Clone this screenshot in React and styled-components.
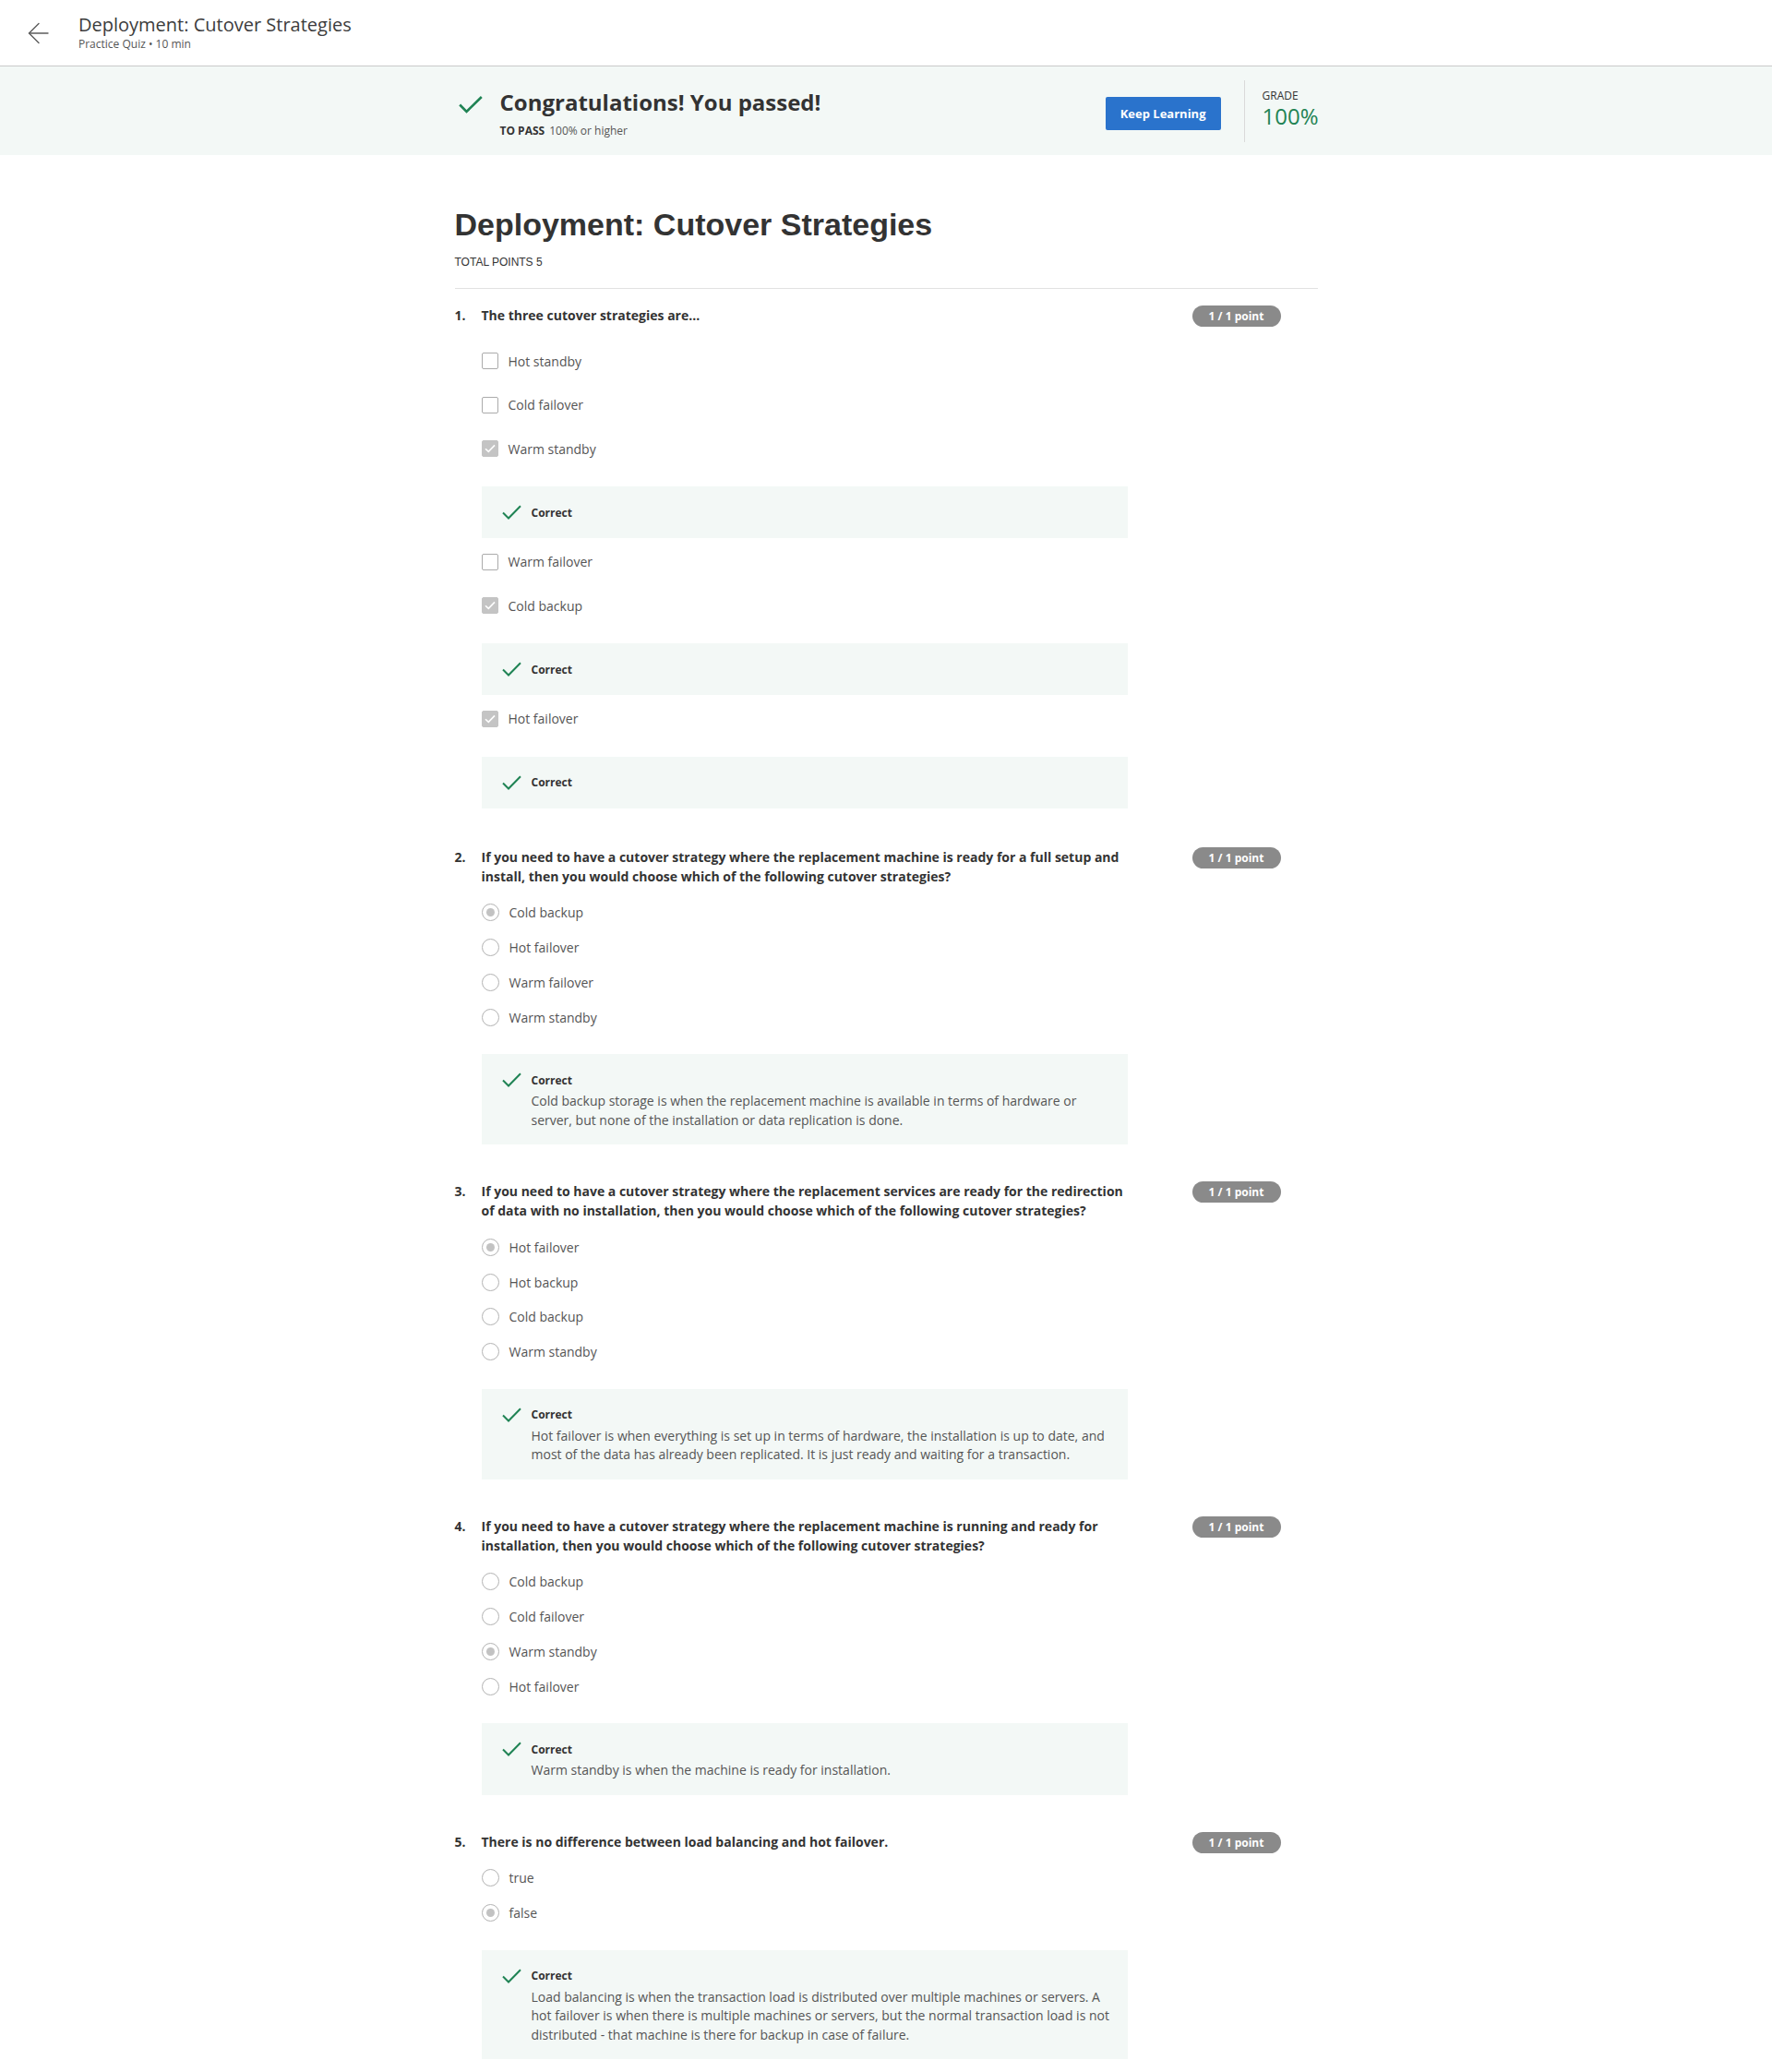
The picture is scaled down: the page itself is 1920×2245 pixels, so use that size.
import React from 'react';
import styled, { createGlobalStyle } from 'styled-components';

const Global = createGlobalStyle`
  html, body { margin: 0; padding: 0; background: #fff; }
  body { font-family: "Open Sans", "Noto Sans", sans-serif; color: #333; }
  * { box-sizing: border-box; }
`;

const GREEN = '#1f8354';

const Header = styled.header`
  height: 72px;
  border-bottom: 1px solid #c9c9c9;
  display: flex;
  align-items: center;
  padding-left: 30px;
  gap: 32px;
`;

const BackButton = styled.button`
  border: 0;
  background: none;
  padding: 0;
  width: 23px;
  height: 24px;
  display: flex;
  color: #5c5c5c;
  cursor: pointer;
`;

const HeaderTitles = styled.div`
  display: flex;
  flex-direction: column;
`;

const HeaderTitle = styled.div`
  font-size: 20px;
  line-height: 24px;
  color: #3c3c3c;
`;

const HeaderSub = styled.div`
  font-size: 12px;
  line-height: 18px;
  color: #555;
`;

const Banner = styled.section`
  background: #f3f8f6;
  height: 96px;
  display: flex;
  align-items: center;
`;

const BannerInner = styled.div`
  width: 935px;
  margin: 0 auto;
  display: flex;
  align-items: center;
`;

const PassBlock = styled.div`
  display: flex;
  align-items: flex-start;
  gap: 19px;
  padding-left: 4px;
  flex: 1;
`;

const BigCheck = styled.svg`
  margin-top: 15px;
  flex: none;
`;

const PassText = styled.div`
  display: flex;
  flex-direction: column;
  gap: 6px;
  margin-top: 6px;
`;

const Congrats = styled.div`
  font-size: 24px;
  line-height: 32px;
  font-weight: 700;
  color: #333;
`;

const ToPass = styled.div`
  font-size: 12px;
  line-height: 18px;
  color: #555;
  display: flex;
  gap: 5px;
`;

const ToPassLabel = styled.span`
  font-weight: 700;
  color: #333;
`;

const PrimaryButton = styled.button`
  height: 36px;
  padding: 0 16px;
  border: 0;
  border-radius: 2px;
  background: #2a73cc;
  color: #fff;
  font-family: "Open Sans", sans-serif;
  font-size: 13px;
  font-weight: 700;
  margin-top: 6px;
  cursor: pointer;
`;

const VDivider = styled.div`
  width: 1px;
  height: 67px;
  background: #dadada;
  margin: 0 19px 0 25px;
`;

const GradeBlock = styled.div`
  display: flex;
  flex-direction: column;
  width: 60px;
  margin-bottom: 5px;
`;

const GradeLabel = styled.div`
  font-size: 12px;
  line-height: 16px;
  color: #333;
`;

const GradeValue = styled.div`
  font-size: 24px;
  line-height: 28px;
  color: ${GREEN};
`;

const Main = styled.main`
  width: 935px;
  margin: 0 auto;
  padding: 55px 0 60px;
`;

const Title = styled.h1`
  margin: 0;
  font-family: "Liberation Sans", Arial, sans-serif;
  font-size: 34px;
  line-height: 41px;
  font-weight: 700;
  color: #333;
`;

const TotalPoints = styled.div`
  margin-top: 12px;
  font-family: "Liberation Sans", Arial, sans-serif;
  font-size: 12px;
  line-height: 16px;
  color: #333;
`;

const Rule = styled.hr`
  margin: 20px 0 0;
  border: 0;
  border-top: 1px solid #e1e1e1;
`;

const QuestionList = styled.div`
  padding-top: 18px;
  display: flex;
  flex-direction: column;
  gap: 40px;
`;

const QuestionRow = styled.div`
  display: flex;
  align-items: flex-start;
`;

const QNumber = styled.div`
  width: 29px;
  flex: none;
  font-size: 14px;
  line-height: 21px;
  font-weight: 700;
  color: #333;
`;

const QBody = styled.div`
  width: 700px;
  flex: none;
`;

const QText = styled.div`
  font-size: 14px;
  line-height: 21px;
  font-weight: 700;
  color: #333;
`;

const Badge = styled.div`
  margin-left: auto;
  margin-right: 40px;
  height: 23px;
  width: 96px;
  border-radius: 12px;
  background: #8a8a8a;
  color: #fff;
  font-size: 12px;
  font-weight: 700;
  display: flex;
  align-items: center;
  justify-content: center;
`;

const Options = styled.div`
  margin-top: ${p => (p.$multi ? '15.5px' : '10.5px')};
  display: flex;
  flex-direction: column;
`;

const OptionRow = styled.label`
  height: ${p => (p.$multi ? '47.5px' : '37.75px')};
  display: flex;
  align-items: center;
  gap: 11px;
  font-size: 14px;
  color: #555;
`;

const CheckBox = styled.span`
  width: 18px;
  height: 18px;
  border-radius: 2px;
  border: 1.5px solid ${p => (p.$checked ? '#c4c4c4' : '#ababab')};
  background: ${p => (p.$checked ? '#c4c4c4' : '#fff')};
  display: flex;
  align-items: center;
  justify-content: center;
  flex: none;
`;

const Radio = styled.span`
  width: 19px;
  height: 19px;
  border-radius: 50%;
  border: 1.5px solid #b3b3b3;
  display: flex;
  align-items: center;
  justify-content: center;
  flex: none;
  &::after {
    content: '';
    width: 9px;
    height: 9px;
    border-radius: 50%;
    background: ${p => (p.$checked ? '#c2c2c2' : 'transparent')};
  }
`;

const Feedback = styled.div`
  background: #f3f8f6;
  padding: 16px 16px 16px 22px;
  margin: ${p => (p.$multi ? '17px 0 2px' : '21px 0 0')};
`;

const FeedbackHead = styled.div`
  height: 24px;
  display: flex;
  align-items: center;
  gap: 11px;
  font-size: 12px;
  font-weight: 700;
  color: #333;
`;

const Explanation = styled.div`
  margin: 1px 0 0 32px;
  font-size: 14px;
  line-height: 20.5px;
  color: #555;
`;

const ArrowLeft = () => (
  <svg width="23" height="24" viewBox="0 0 23 24" fill="none" stroke="currentColor" strokeWidth="1.4" strokeLinecap="round" strokeLinejoin="round">
    <path d="M22 12H1.5" />
    <path d="M12 1.5 1.5 12 12 22.5" />
  </svg>
);

const SmallCheck = () => (
  <svg width="21" height="16" viewBox="0 0 21 16" fill="none" stroke={GREEN} strokeWidth="2">
    <path d="M1 8.5 7 14.5 20 1.2" />
  </svg>
);

const BoxTick = () => (
  <svg width="12" height="10" viewBox="0 0 12 10" fill="none" stroke="#fff" strokeWidth="1.6">
    <path d="M1 5.2 4.3 8.4 11 1.4" />
  </svg>
);

function FeedbackBox({ multi, text }) {
  return (
    <Feedback $multi={multi}>
      <FeedbackHead>
        <SmallCheck />
        Correct
      </FeedbackHead>
      {text && <Explanation>{text}</Explanation>}
    </Feedback>
  );
}

const questions = [
  {
    text: 'The three cutover strategies are...',
    multi: true,
    options: [
      { label: 'Hot standby' },
      { label: 'Cold failover' },
      { label: 'Warm standby', checked: true },
      { label: 'Warm failover' },
      { label: 'Cold backup', checked: true },
      { label: 'Hot failover', checked: true },
    ],
  },
  {
    text: 'If you need to have a cutover strategy where the replacement machine is ready for a full setup and install, then you would choose which of the following cutover strategies?',
    options: [
      { label: 'Cold backup', checked: true },
      { label: 'Hot failover' },
      { label: 'Warm failover' },
      { label: 'Warm standby' },
    ],
    explanation:
      'Cold backup storage is when the replacement machine is available in terms of hardware or server, but none of the installation or data replication is done.',
  },
  {
    text: 'If you need to have a cutover strategy where the replacement services are ready for the redirection of data with no installation, then you would choose which of the following cutover strategies?',
    options: [
      { label: 'Hot failover', checked: true },
      { label: 'Hot backup' },
      { label: 'Cold backup' },
      { label: 'Warm standby' },
    ],
    explanation:
      'Hot failover is when everything is set up in terms of hardware, the installation is up to date, and most of the data has already been replicated. It is just ready and waiting for a transaction.',
  },
  {
    text: 'If you need to have a cutover strategy where the replacement machine is running and ready for installation, then you would choose which of the following cutover strategies?',
    options: [
      { label: 'Cold backup' },
      { label: 'Cold failover' },
      { label: 'Warm standby', checked: true },
      { label: 'Hot failover' },
    ],
    explanation: 'Warm standby is when the machine is ready for installation.',
  },
  {
    text: 'There is no difference between load balancing and hot failover.',
    options: [{ label: 'true' }, { label: 'false', checked: true }],
    explanation:
      'Load balancing is when the transaction load is distributed over multiple machines or servers. A hot failover is when there is multiple machines or servers, but the normal transaction load is not distributed - that machine is there for backup in case of failure.',
  },
];

function Question({ q, index }) {
  return (
    <QuestionRow>
      <QNumber>{index + 1}.</QNumber>
      <QBody>
        <QText>{q.text}</QText>
        <Options $multi={q.multi}>
          {q.options.map((o, i) => (
            <React.Fragment key={i}>
              <OptionRow $multi={q.multi}>
                {q.multi ? (
                  <CheckBox $checked={o.checked}>{o.checked && <BoxTick />}</CheckBox>
                ) : (
                  <Radio $checked={o.checked} />
                )}
                {o.label}
              </OptionRow>
              {q.multi && o.checked && <FeedbackBox multi />}
            </React.Fragment>
          ))}
        </Options>
        {!q.multi && <FeedbackBox text={q.explanation} />}
      </QBody>
      <Badge>1 / 1 point</Badge>
    </QuestionRow>
  );
}

export default function App() {
  return (
    <>
      <Global />
      <Header>
        <BackButton aria-label="Back">
          <ArrowLeft />
        </BackButton>
        <HeaderTitles>
          <HeaderTitle>Deployment: Cutover Strategies</HeaderTitle>
          <HeaderSub>Practice Quiz • 10 min</HeaderSub>
        </HeaderTitles>
      </Header>
      <Banner>
        <BannerInner>
          <PassBlock>
            <BigCheck width="26" height="19" viewBox="0 0 26 19" fill="none" stroke={GREEN} strokeWidth="2.6">
              <path d="M1.2 9.5 8.5 17 24.8 1" />
            </BigCheck>
            <PassText>
              <Congrats>Congratulations! You passed!</Congrats>
              <ToPass>
                <ToPassLabel>TO PASS</ToPassLabel>
                <span>100% or higher</span>
              </ToPass>
            </PassText>
          </PassBlock>
          <PrimaryButton>Keep Learning</PrimaryButton>
          <VDivider />
          <GradeBlock>
            <GradeLabel>GRADE</GradeLabel>
            <GradeValue>100%</GradeValue>
          </GradeBlock>
        </BannerInner>
      </Banner>
      <Main>
        <Title>Deployment: Cutover Strategies</Title>
        <TotalPoints>TOTAL POINTS 5</TotalPoints>
        <Rule />
        <QuestionList>
          {questions.map((q, i) => (
            <Question key={i} q={q} index={i} />
          ))}
        </QuestionList>
      </Main>
    </>
  );
}
